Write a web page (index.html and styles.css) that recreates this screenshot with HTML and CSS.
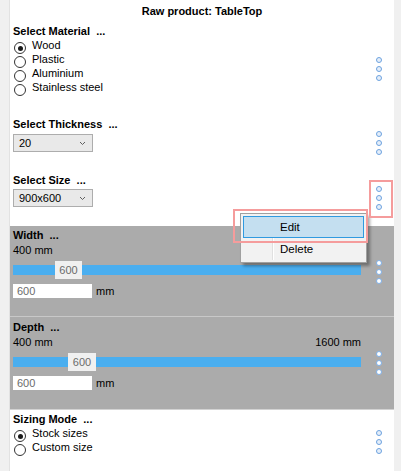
FILE: index.html
```html
<!DOCTYPE html>
<html>
<head>
<meta charset="utf-8">
<title>Raw product</title>
<link rel="stylesheet" href="styles.css">
</head>
<body>
<div class="window">
  <div class="gutter"></div>
  <main class="panel">
    <div class="title">Raw product: TableTop</div>

    <section class="sec sec-material">
      <div class="content">
        <div class="label">Select Material&nbsp; ...</div>
        <div class="radio checked"><span class="rb"></span>Wood</div>
        <div class="radio"><span class="rb"></span>Plastic</div>
        <div class="radio"><span class="rb"></span>Aluminium</div>
        <div class="radio"><span class="rb"></span>Stainless steel</div>
      </div>
      <div class="dots"><i></i><i></i><i></i></div>
    </section>

    <section class="sec sec-thickness">
      <div class="content">
        <div class="label">Select Thickness&nbsp; ...</div>
        <div class="combo"><span>20</span><svg class="chev" width="7" height="5" viewBox="0 0 7 5"><path d="M1 1 L3.5 3.5 L6 1" fill="none" stroke="#606060" stroke-width="1"/></svg></div>
      </div>
      <div class="dots"><i></i><i></i><i></i></div>
    </section>

    <section class="sec sec-size">
      <div class="content">
        <div class="label">Select Size&nbsp; ...</div>
        <div class="combo"><span>900x600</span><svg class="chev" width="7" height="5" viewBox="0 0 7 5"><path d="M1 1 L3.5 3.5 L6 1" fill="none" stroke="#606060" stroke-width="1"/></svg></div>
      </div>
      <div class="dots"><i></i><i></i><i></i></div>
    </section>

    <section class="sec gray sec-width">
      <div class="content">
        <div class="label">Width&nbsp; ...</div>
        <div class="range"><span>400 mm</span><span></span></div>
        <div class="slider"><div class="bar"></div><div class="thumb" style="left:42px">600</div></div>
        <div class="field"><div class="input">600</div><span class="unit">mm</span></div>
      </div>
      <div class="dots"><i></i><i></i><i></i></div>
    </section>

    <section class="sec gray sec-depth">
      <div class="content">
        <div class="label">Depth&nbsp; ...</div>
        <div class="range"><span>400 mm</span><span>1600 mm</span></div>
        <div class="slider"><div class="bar"></div><div class="thumb wide" style="left:55px">600</div></div>
        <div class="field"><div class="input">600</div><span class="unit">mm</span></div>
      </div>
      <div class="dots"><i></i><i></i><i></i></div>
    </section>

    <section class="sec sec-mode">
      <div class="content">
        <div class="label">Sizing Mode&nbsp; ...</div>
        <div class="radio checked"><span class="rb"></span>Stock sizes</div>
        <div class="radio"><span class="rb"></span>Custom size</div>
      </div>
      <div class="dots"><i></i><i></i><i></i></div>
    </section>
  </main>
  <div class="rstrip"></div>
</div>

<div class="menu">
  <div class="item active">Edit</div>
  <div class="item">Delete</div>
</div>

<div class="mark mark-dots"></div>
<div class="mark mark-edit"></div>
</body>
</html>
```

FILE: styles.css
```css
html, body {
  margin: 0;
  padding: 0;
}

body {
  width: 401px;
  height: 471px;
  overflow: hidden;
  position: relative;
  background: #f0f0f0;
  font-family: "Liberation Sans", Arial, sans-serif;
  font-size: 11px;
  line-height: 14px;
  color: #000;
}

.window {
  display: flex;
  height: 471px;
}

.gutter {
  flex: none;
  width: 9px;
  border-right: 1px solid #e2e2e2;
}

.panel {
  flex: none;
  width: 384px;
  background: #fff;
  display: flex;
  flex-direction: column;
}

.rstrip {
  flex: 1;
}

.title {
  padding-top: 4px;
  height: 14px;
  text-align: center;
  font-weight: bold;
}

.sec {
  display: flex;
  box-sizing: border-box;
  flex: none;
}

.content {
  width: 351px;
  padding-left: 3px;
  box-sizing: border-box;
}

.dots {
  width: 33px;
  padding-left: 15px;
  box-sizing: border-box;
}

.dots i {
  display: block;
  width: 6px;
  height: 6px;
  box-sizing: border-box;
  border: 1px solid #6ea2df;
  border-radius: 50%;
  background: #e4eefa;
  margin-bottom: 3px;
}

.gray .dots i {
  background: #ffffff;
  border-color: #7eb0ea;
}

.label {
  font-weight: bold;
}

/* sections */
.sec-material { height: 96px; padding-top: 6px; }
.sec-material .dots { padding-top: 33px; }

.sec-thickness { height: 56px; padding-top: 3px; }
.sec-thickness .combo { margin-top: 3px; }
.sec-thickness .dots { padding-top: 14px; }

.sec-size { height: 56px; padding-top: 3px; }
.sec-size .combo { margin-top: 2px; }
.sec-size .dots { padding-top: 13px; }

.gray { background: #ababab; }

.sec-width {
  height: 91px;
  padding-top: 2px;
  border-bottom: 1px solid #c8c8c8;
}
.sec-width .dots { padding-top: 32px; }

.sec-depth {
  height: 93px;
  padding-top: 3px;
  border-bottom: 1px solid #d2d2d2;
}
.sec-depth .dots { padding-top: 31px; }

.sec-mode { flex: 1; padding-top: 2px; }
.sec-mode .dots { padding-top: 18px; }

/* radio buttons */
.radio {
  display: flex;
  height: 14px;
}

.rb {
  flex: none;
  width: 12px;
  height: 12px;
  box-sizing: border-box;
  margin: 4px 6px 0 1px;
  border: 1px solid #333;
  border-radius: 50%;
  background: #fff;
  display: flex;
  align-items: center;
  justify-content: center;
}

.radio.checked .rb::after {
  content: "";
  width: 5px;
  height: 5px;
  border-radius: 50%;
  background: #1a1a1a;
}

/* combo box */
.combo {
  width: 80px;
  height: 18px;
  box-sizing: border-box;
  border: 1px solid #adadad;
  background: #e9e9e9;
  display: flex;
  align-items: center;
  justify-content: space-between;
  padding: 0 6px 0 5px;
}

.chev {
  display: block;
}

/* range slider rows */
.range {
  display: flex;
  justify-content: space-between;
  margin-top: 1px;
}

.slider {
  position: relative;
  height: 18px;
  margin-top: 4px;
}

.slider .bar {
  position: absolute;
  left: 0;
  right: 0;
  top: 4px;
  height: 10px;
  background: #4aaeef;
}

.slider .thumb {
  position: absolute;
  top: 0;
  width: 27px;
  height: 18px;
  line-height: 18px;
  background: #f0f0f0;
  color: #6b6b6b;
  text-align: center;
}

.slider .thumb.wide {
  width: 28px;
}

.field {
  display: flex;
  align-items: center;
  margin-top: 5px;
}

.input {
  width: 79px;
  height: 14px;
  box-sizing: border-box;
  padding-left: 4px;
  background: #fff;
  color: #6b6b6b;
}

.unit {
  margin-left: 4px;
}

/* context menu */
.menu {
  position: absolute;
  left: 240px;
  top: 213px;
  width: 127px;
  height: 50px;
  box-sizing: border-box;
  border: 1px solid #a0a0a0;
  background: #f2f2f2;
  padding: 2px;
  box-shadow: 3px 3px 3px rgba(0, 0, 0, 0.35);
  font-size: 11.5px;
}

.menu::before {
  content: "";
  position: absolute;
  left: 31px;
  top: 2px;
  bottom: 2px;
  width: 1px;
  background: #e0e0e0;
  box-shadow: 1px 0 0 #ffffff;
}

.item {
  position: relative;
  height: 22px;
  line-height: 22px;
  padding-left: 37px;
  box-sizing: border-box;
}

.item.active {
  background: #c4dff0;
  border: 1px solid #2f9ae0;
  line-height: 20px;
  padding-left: 36px;
}

/* annotation marks */
.mark {
  position: absolute;
  box-sizing: border-box;
  border: 2px solid #f59c9c;
}

.mark-dots {
  left: 369px;
  top: 180px;
  width: 24px;
  height: 38px;
}

.mark-edit {
  left: 233px;
  top: 209px;
  width: 135px;
  height: 34px;
}
```
